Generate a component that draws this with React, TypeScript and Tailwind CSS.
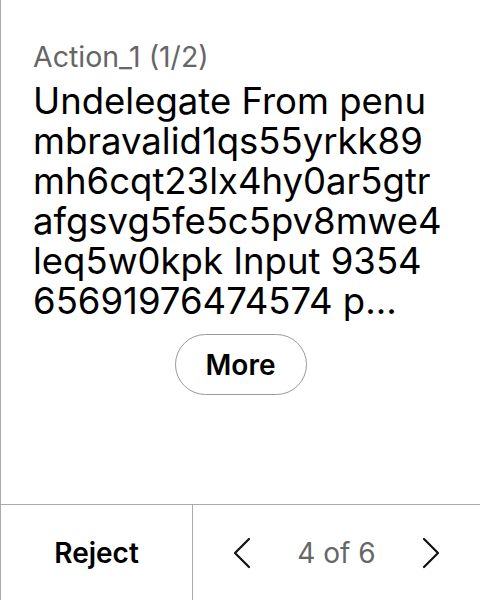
const font = "font-['Inter','Liberation_Sans',sans-serif]";

function Chevron({ dir }: { dir: "left" | "right" }) {
  return (
    <svg width="18" height="32" viewBox="0 0 18 32" fill="none" stroke="#111" strokeWidth="2.2" strokeLinecap="round" strokeLinejoin="round">
      {dir === "left" ? <polyline points="16,2 2,16 16,30" /> : <polyline points="2,2 16,16 2,30" />}
    </svg>
  );
}

export default function App() {
  const title =
    "Undelegate From penumbravalid1qs55yrkk89mh6cqt23lx4hy0ar5gtrafgsvg5fe5c5pv8mwe4leq5w0kpk Input 9354\n65691976474574 p...";

  return (
    <div className={`${font} flex h-[600px] w-[480px] flex-col border-l border-[#aaaaaa] bg-white`}>
      <div className="flex flex-1 flex-col pl-8 pr-[34px] pt-[41px]">
        <div className="text-[28.5px] leading-8 text-[#666666]">Action_1 (1/2)</div>
        <div className="mt-2 whitespace-pre-line break-all text-[36.5px] leading-10 text-black">{title}</div>
        <div className="mt-[13px] flex justify-center pl-[2px]">
          <button className="flex h-[61px] w-[132px] items-center justify-center rounded-full border border-[#9a9a9a] text-[28px] font-semibold text-black">
            More
          </button>
        </div>
      </div>

      <div className="flex h-[96px] border-t border-[#aaaaaa]">
        <button className="flex w-[192px] items-center justify-center border-r border-[#aaaaaa] text-[28px] font-semibold text-black">
          Reject
        </button>
        <div className="flex flex-1 items-center justify-center gap-[46px]">
          <Chevron dir="left" />
          <span className="text-[28px] text-[#666666]">4 of 6</span>
          <Chevron dir="right" />
        </div>
      </div>
    </div>
  );
}
